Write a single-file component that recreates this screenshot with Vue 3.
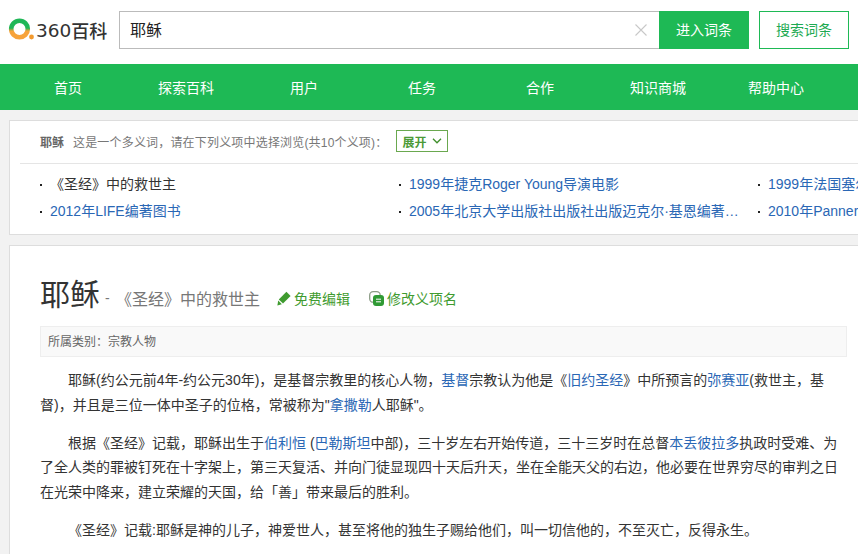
<template>
  <div class="baike-page">
    <header class="top-bar">
      <div class="logo">
        <svg class="logo-mark" width="28" height="30" viewBox="0 0 28 30">
          <defs>
            <linearGradient id="ringGrad" x1="0" y1="0" x2="0" y2="1">
              <stop offset="0.45" stop-color="#1fb757" />
              <stop offset="0.62" stop-color="#f7a33a" />
            </linearGradient>
          </defs>
          <circle cx="11.5" cy="14" r="8.3" fill="none" stroke="url(#ringGrad)" stroke-width="4.6" />
          <circle cx="23.5" cy="22" r="2.4" fill="#f39a2e" />
        </svg>
        <span class="logo-num">360</span><span class="logo-cn">百科</span>
      </div>
      <div class="search-box">
        <input class="search-input" :value="keyword" readonly />
        <svg class="clear-icon" width="12" height="12" viewBox="0 0 12 12">
          <path d="M0.5 0.5L11.5 11.5M11.5 0.5L0.5 11.5" stroke="#c8c8c8" stroke-width="1.1" fill="none" />
        </svg>
      </div>
      <button class="btn-enter">进入词条</button>
      <button class="btn-search">搜索词条</button>
    </header>

    <nav class="main-nav">
      <a v-for="item in navItems" :key="item" class="nav-item">{{ item }}</a>
    </nav>

    <section class="meaning-card">
      <div class="meaning-head">
        <b class="meaning-word">耶稣</b>
        <span class="meaning-tip">这是一个多义词，请在下列义项中选择浏览(共10个义项)：</span>
        <button class="expand-btn">
          展开
          <svg width="10" height="6" viewBox="0 0 10 6">
            <path d="M1 0.8L5 4.8L9 0.8" stroke="#3f8f2b" stroke-width="1.3" fill="none" />
          </svg>
        </button>
      </div>
      <ul class="meaning-list">
        <li v-for="m in meanings" :key="m.text" class="meaning-item">
          <span class="meaning-text" :class="{ current: m.current }">{{ m.text }}</span>
        </li>
      </ul>
    </section>

    <main class="article-card">
      <div class="title-row">
        <h1 class="entry-title">耶稣</h1>
        <span class="entry-dash">-</span>
        <span class="entry-sub">《圣经》中的救世主</span>
        <a class="entry-action edit">
          <svg width="14" height="15" viewBox="0 0 14 15">
            <path d="M9.4 0.8L13.6 5L6 12.6L1.8 8.4Z" fill="#3f9b2f" />
            <path d="M1.2 9.6L4.8 13.2L0.4 14.4Z" fill="#3f9b2f" />
          </svg>
          免费编辑
        </a>
        <a class="entry-action rename">
          <svg width="15" height="15" viewBox="0 0 15 15">
            <rect x="0.7" y="0.7" width="10.5" height="10.5" rx="3.5" fill="none" stroke="#8c9c86" stroke-width="1.3" />
            <rect x="4" y="4" width="11" height="11" rx="3" fill="#2f9a34" />
            <path d="M7 8.2H12M7 10.8H12" stroke="#fff" stroke-width="1" />
          </svg>
          修改义项名
        </a>
      </div>

      <div class="category-bar">所属类别：宗教人物</div>

      <p class="para">耶稣(约公元前4年-约公元30年)，是基督宗教里的核心人物，<a>基督</a>宗教认为他是《<a>旧约圣经</a>》中所预言的<a>弥赛亚</a>(救世主，基督)，并且是三位一体中圣子的位格，常被称为"<a>拿撒勒</a>人耶稣"。</p>
      <p class="para">根据《圣经》记载，耶稣出生于<a>伯利恒</a> (<a>巴勒斯坦</a>中部)，三十岁左右开始传道，三十三岁时在总督<a>本丢彼拉多</a>执政时受难、为了全人类的罪被钉死在十字架上，第三天复活、并向门徒显现四十天后升天，坐在全能天父的右边，他必要在世界穷尽的审判之日在光荣中降来，建立荣耀的天国，给「善」带来最后的胜利。</p>
      <p class="para">《圣经》记载:耶稣是神的儿子，神爱世人，甚至将他的独生子赐给他们，叫一切信他的，不至灭亡，反得永生。</p>
    </main>
  </div>
</template>

<script setup>
const keyword = '耶稣'
const navItems = ['首页', '探索百科', '用户', '任务', '合作', '知识商城', '帮助中心']
const meanings = [
  { text: '《圣经》中的救世主', current: true },
  { text: '1999年捷克Roger Young导演电影' },
  { text: '1999年法国塞尔维亚电影' },
  { text: '2012年LIFE编著图书' },
  { text: '2005年北京大学出版社出版社出版迈克尔·基恩编著图书' },
  { text: '2010年Panner编著图书' }
]
</script>

<style>
html, body { margin: 0; height: 100%; overflow: hidden; background: #f2f2f2; }
</style>

<style scoped>
.baike-page {
  width: 858px; height: 554px; overflow: hidden; background: #f2f2f2; color: #333;
  font-family: "Liberation Sans", "Noto Sans CJK SC", sans-serif; font-size: 14px;
}

.top-bar { height: 64px; box-sizing: border-box; padding: 11px 9px 0 8px; background: #fff; display: flex; align-items: flex-start; }
.logo { width: 111px; height: 38px; display: flex; align-items: center; color: #333; }
.logo-mark { flex-shrink: 0; }
.logo-num { font-family: "DejaVu Sans", sans-serif; font-size: 18.5px; }
.logo-cn { font-size: 18px; font-weight: 500; }

.search-box {
  width: 540px; height: 38px; box-sizing: border-box; border: 1px solid #bbb; border-right: none;
  display: flex; align-items: center; background: #fff;
}
.search-input {
  flex: 1; min-width: 0; border: none; outline: none; padding: 0 0 2px 10px; height: 34px; box-sizing: border-box;
  font-family: inherit; font-size: 16px; color: #222; background: transparent;
}
.clear-icon { margin-right: 12px; }
.btn-enter, .btn-search { height: 38px; box-sizing: border-box; font-family: inherit; font-size: 14px; padding: 0 0 2px; }
.btn-enter { width: 90px; border: none; background: #1eb955; color: #fff; }
.btn-search { width: 90px; margin-left: 10px; border: 1px solid #1eb955; background: #fff; color: #1eaa52; }

.main-nav { height: 46px; box-sizing: border-box; padding: 0 0 1px 9px; background: #1eb955; display: flex; align-items: center; }
.nav-item { width: 118px; text-align: center; color: #fff; font-size: 14px; }

.meaning-card {
  width: 1180px; height: 115px; box-sizing: border-box; margin: 10px 0 10px 9px;
  background: #fff; border: 1px solid #ddd; border-right: none;
}
.meaning-head {
  height: 43px; box-sizing: border-box; margin-left: 10px; padding: 0 0 2px 20px;
  border-bottom: 1px solid #e5e5e5; display: flex; align-items: center; font-size: 12px; color: #666;
}
.meaning-word { width: 33px; font-size: 12px; }
.meaning-tip { width: 323px; color: #777; white-space: nowrap; letter-spacing: 0.18px; }
.expand-btn {
  width: 52px; height: 22px; box-sizing: border-box; padding: 0; border: 1px solid #6aa84f; background: #fff;
  color: #4c9a37; font-family: inherit; font-size: 12px; font-weight: 700;
  display: flex; align-items: center; justify-content: center; gap: 5px;
}
.meaning-list {
  list-style: none; margin: 0; padding: 5px 0 0 30px;
  display: grid; grid-template-columns: repeat(3, 359px); grid-auto-rows: 27px;
}
.meaning-item { display: flex; align-items: center; gap: 8px; }
.meaning-item::before { content: ""; width: 2px; height: 2px; margin-top: 4px; background: #222; flex-shrink: 0; }
.meaning-text { max-width: 331px; overflow: hidden; white-space: nowrap; text-overflow: ellipsis; color: #2a67b5; }
.meaning-text.current { color: #333; }

.article-card {
  width: 1180px; height: 400px; box-sizing: border-box; margin-left: 9px; padding: 29px 0 0 30px;
  background: #fff; border: 1px solid #ddd; border-right: none; border-bottom: none;
}
.title-row { height: 40px; margin-bottom: 11px; display: flex; align-items: center; }
.entry-title { margin: 0; font-size: 30px; font-weight: 400; color: #333; line-height: 40px; }
.entry-dash { margin: 6px 0 0 5px; width: 11px; color: #777; font-size: 14px; }
.entry-sub { width: 161px; margin-top: 6px; font-size: 16px; color: #777; white-space: nowrap; }
.entry-action { display: flex; align-items: center; margin-top: 6px; font-size: 14px; color: #3f9b2f; white-space: nowrap; }
.entry-action svg { flex-shrink: 0; }
.entry-action.edit { width: 92px; gap: 3px; }
.entry-action.rename { gap: 3px; }

.category-bar {
  width: 807px; height: 31px; box-sizing: border-box; padding-left: 7px; line-height: 31px;
  background: #f9f9f9; border: 1px solid #eee; font-size: 12px; color: #666;
}
.para { width: 807px; margin: 11px 0 13.5px; line-height: 24.5px; text-indent: 28px; color: #333; }
.para a { color: #2a67b5; }
</style>
